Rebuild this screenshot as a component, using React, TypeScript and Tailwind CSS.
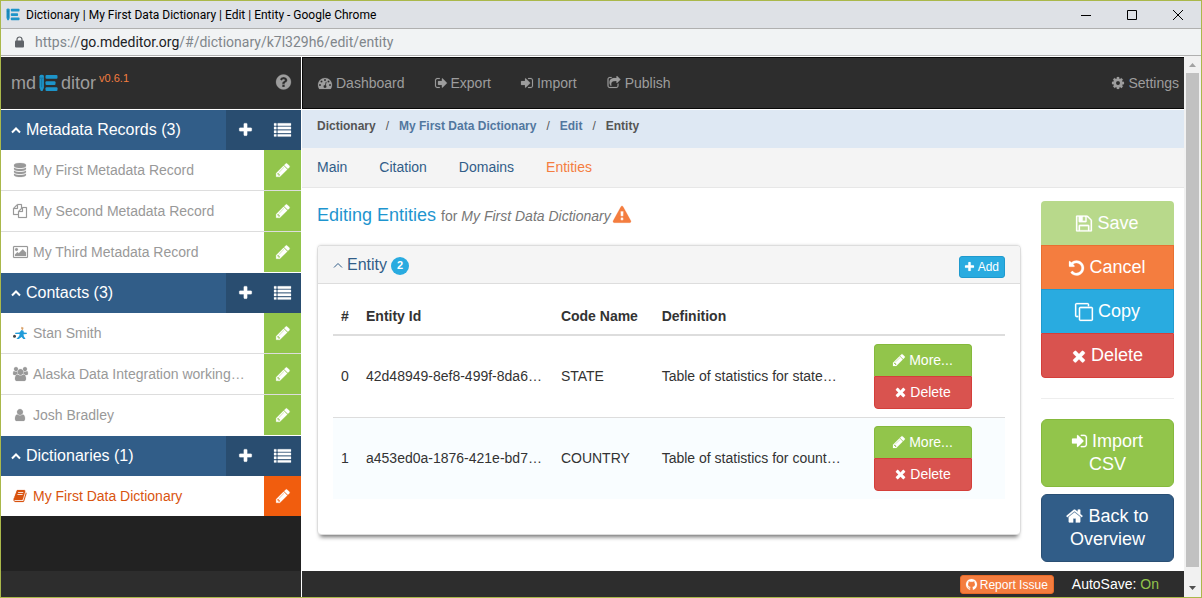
import type { ReactNode } from "react";

type IconSpec = { box: string; w: number; d: string };

const icons: Record<string, IconSpec> = {
  plus: {
    box: "192 0 1408 1792",
    w: 1408,
    d: "M1600 736v192q0 40-28 68t-68 28h-416v416q0 40-28 68t-68 28h-192q-40 0-68-28t-28-68v-416h-416q-40 0-68-28t-28-68v-192q0-40 28-68t68-28h416v-416q0-40 28-68t68-28h192q40 0 68 28t28 68v416h416q40 0 68 28t28 68z",
  },
  pencil: {
    box: "128 0 1536 1792",
    w: 1536,
    d: "M491 1536l91-91-235-235-91 91v107h128v128h107zm523-928q0-22-22-22-10 0-17 7l-542 542q-7 7-7 17 0 22 22 22 10 0 17-7l542-542q7-7 7-17zm-54-192l416 416-832 832h-416v-416zm683 96q0 53-37 90l-166 166-416-416 166-165q36-38 90-38 53 0 91 38l235 234q37 39 37 91z",
  },
  times: {
    box: "192 0 1408 1792",
    w: 1408,
    d: "M1490 1322q0 40-28 68l-136 136q-28 28-68 28t-68-28l-294-294-294 294q-28 28-68 28t-68-28l-136-136q-28-28-28-68t28-68l294-294-294-294q-28-28-28-68t28-68l136-136q28-28 68-28t68 28l294 294 294-294q28-28 68-28t68 28l136 136q28 28 28 68t-28 68l-294 294 294 294q28 28 28 68z",
  },
  question: {
    box: "128 0 1536 1792",
    w: 1536,
    d: "M1024 1376v-192q0-14-9-23t-23-9h-192q-14 0-23 9t-9 23v192q0 14 9 23t23 9h192q14 0 23-9t9-23zm256-672q0-88-55.5-163t-138.5-116-170-41q-243 0-371 213-15 24 8 42l132 100q7 6 19 6 16 0 25-12 53-68 86-92 34-24 86-24 48 0 85.5 26t37.5 59q0 38-20 61t-68 45q-63 28-115.5 86.5t-52.5 125.5v36q0 14 9 23t23 9h192q14 0 23-9t9-23q0-19 21.5-49.5t54.5-49.5q32-18 49-28.5t46-35 44.5-48 28-60.5 12.5-81zm384 192q0 209-103 385.5t-279.5 279.5-385.5 103-385.5-103-279.5-279.5-103-385.5 103-385.5 279.5-279.5 385.5-103 385.5 103 279.5 279.5 103 385.5z",
  },
  list: {
    box: "0 0 1792 1792",
    w: 1792,
    d: "M32 1280h192q32 0 32 32v192q0 32-32 32H32q-32 0-32-32v-192q0-32 32-32zM32 896h192q32 0 32 32v192q0 32-32 32H32q-32 0-32-32V928q0-32 32-32zM32 512h192q32 0 32 32v192q0 32-32 32H32q-32 0-32-32V544q0-32 32-32zM32 128h192q32 0 32 32v192q0 32-32 32H32q-32 0-32-32V160q0-32 32-32zM416 1280h1344q32 0 32 32v192q0 32-32 32H416q-32 0-32-32v-192q0-32 32-32zM416 896h1344q32 0 32 32v192q0 32-32 32H416q-32 0-32-32V928q0-32 32-32zM416 512h1344q32 0 32 32v192q0 32-32 32H416q-32 0-32-32V544q0-32 32-32zM416 128h1344q32 0 32 32v192q0 32-32 32H416q-32 0-32-32V160q0-32 32-32z",
  },
  signOut: {
    box: "64 0 1568 1792",
    w: 1568,
    d: "M704 1440q0 4 1 20t.5 26.5-3 23.5-10 19.5-20.5 6.5h-320q-119 0-203.5-84.5t-84.5-203.5v-704q0-119 84.5-203.5t203.5-84.5h320q13 0 22.5 9.5t9.5 22.5q0 4 1 20t.5 26.5-3 23.5-10 19.5-20.5 6.5h-320q-66 0-113 47t-47 113v704q0 66 47 113t113 47h312l11.5 1 11.5 3 8 5.5 7 9 2 13.5zm928-544q0 26-19 45l-544 544q-19 19-45 19t-45-19-19-45v-288h-448q-26 0-45-19t-19-45v-384q0-26 19-45t45-19h448v-288q0-26 19-45t45-19 45 19l544 544q19 19 19 45z",
  },
  signIn: {
    box: "128 0 1536 1792",
    w: 1536,
    d: "M1312 896q0 26-19 45l-544 544q-19 19-45 19t-45-19-19-45v-288h-448q-26 0-45-19t-19-45v-384q0-26 19-45t45-19h448v-288q0-26 19-45t45-19 45 19l544 544q19 19 19 45zm352-352v704q0 119-84.5 203.5t-203.5 84.5h-320q-13 0-22.5-9.5t-9.5-22.5q0-4-1-20t-.5-26.5 3-23.5 10-19.5 20.5-6.5h320q66 0 113-47t47-113v-704q0-66-47-113t-113-47h-312l-11.5-1-11.5-3-8-5.5-7-9-2-13.5q0-4-1-20t-.5-26.5 3-23.5 10-19.5 20.5-6.5h320q119 0 203.5 84.5t84.5 203.5z",
  },
  share: {
    box: "0 0 1792 1792",
    w: 1792,
    d: "M1472 989v259q0 119-84.5 203.5t-203.5 84.5h-832q-119 0-203.5-84.5t-84.5-203.5v-832q0-119 84.5-203.5t203.5-84.5h255q13 0 22.5 9.5t9.5 22.5q0 27-26 32-77 26-133 60-10 4-16 4h-112q-66 0-113 47t-47 113v832q0 66 47 113t113 47h832q66 0 113-47t47-113v-214q0-19 18-29 28-13 54-37 16-16 35-8 21 9 21 29zm237-496l-384 384q-18 19-45 19-12 0-25-5-39-17-39-59v-192h-160q-323 0-438 131-119 137-74 473 3 23-20 34-8 2-12 2-16 0-26-13-10-14-21-31t-39.5-68.5-49.5-99.5-38.5-114-17.5-122q0-49 3.5-91t14-90 28-88 47-81.5 68.5-74 94.5-61.5 124.5-48.5 159.5-30.5 196.5-11h160v-192q0-42 39-59 13-5 25-5 26 0 45 19l384 384q19 19 19 45t-19 45z",
  },
  warning: {
    box: "0 0 1792 1792",
    w: 1792,
    d: "M1024 1375v-190q0-14-9.5-23.5t-22.5-9.5h-192q-13 0-22.5 9.5t-9.5 23.5v190q0 14 9.5 23.5t22.5 9.5h192q13 0 22.5-9.5t9.5-23.5zm-2-374l18-459q0-12-10-19-13-11-24-11h-220q-11 0-24 11-10 7-10 21l17 457q0 10 10 16.5t24 6.5h185q14 0 23.5-6.5t10.5-16.5zm-14-934l768 1408q35 63-2 126-17 29-46.5 46t-63.5 17h-1536q-34 0-63.5-17t-46.5-46q-37-63-2-126l768-1408q17-31 47-49t65-18 65 18 47 49z",
  },
  cog: {
    box: "128 0 1536 1792",
    w: 1536,
    d: "M1152 896q0-106-75-181t-181-75-181 75-75 181 75 181 181 75 181-75 75-181zm512-109v222q0 12-8 23t-20 13l-185 28q-19 54-39 91 35 50 107 138 10 12 10 25t-9 23q-27 37-99 108t-94 71q-12 0-26-9l-138-108q-44 23-91 38-16 136-29 186-7 28-36 28h-222q-14 0-24.5-8.5t-11.5-21.5l-28-184q-49-16-90-37l-141 107q-10 9-25 9-14 0-25-11-126-114-165-168-7-10-7-23 0-12 8-23 15-21 51-66.5t54-70.5q-27-50-41-99l-183-27q-13-2-21-12.5t-8-23.5v-222q0-12 8-23t19-13l186-28q14-46 39-92-40-57-107-138-10-12-10-24 0-10 9-23 26-36 98.5-107.5t94.5-71.5q13 0 26 10l138 107q44-23 91-38 16-136 29-186 7-28 36-28h222q14 0 24.5 8.5t11.5 21.5l28 184q49 16 90 37l142-107q9-9 24-9 13 0 25 10 129 119 165 170 7 8 7 22 0 12-8 23-15 21-51 66.5t-54 70.5q26 50 41 98l183 28q13 2 21 12.5t8 23.5z",
  },
  undo: {
    box: "128 0 1536 1792",
    w: 1536,
    d: "M1664 896q0 156-61 298t-164 245-245 164-298 61q-172 0-327-72.5t-264-204.5q-7-10-6.5-22.5t8.5-20.5l137-138q10-9 25-9 16 2 23 12 73 95 179 147t225 52q104 0 198.5-40.5t163.5-109.5 109.5-163.5 40.5-198.5-40.5-198.5-109.5-163.5-163.5-109.5-198.5-40.5q-98 0-188 35.5t-160 101.5l137 138q31 30 14 69-17 40-59 40h-448q-26 0-45-19t-19-45v-448q0-42 40-59 39-17 69 14l130 129q107-101 244.5-156.5t284.5-55.5q156 0 298 61t245 164 164 245 61 298z",
  },
  floppy: {
    box: "128 0 1536 1792",
    w: 1536,
    d: "M512 1536h768v-384h-768v384zm896 0h128v-896q0-14-10-38.5t-20-34.5l-281-281q-10-10-34-20t-39-10v416q0 40-28 68t-68 28h-576q-40 0-68-28t-28-68v-416h-128v1280h128v-416q0-40 28-68t68-28h832q40 0 68 28t28 68v416zm-384-928v-320q0-13-9.5-22.5t-22.5-9.5h-192q-13 0-22.5 9.5t-9.5 22.5v320q0 13 9.5 22.5t22.5 9.5h192q13 0 22.5-9.5t9.5-22.5zm640 32v928q0 40-28 68t-68 28h-1344q-40 0-68-28t-28-68v-1344q0-40 28-68t68-28h928q40 0 88 20t76 48l280 280q28 28 48 76t20 88z",
  },
  clone: {
    box: "0 0 1792 1792",
    w: 1792,
    d: "M1664 1632v-1088q0-13-9.5-22.5t-22.5-9.5h-1088q-13 0-22.5 9.5t-9.5 22.5v1088q0 13 9.5 22.5t22.5 9.5h1088q13 0 22.5-9.5t9.5-22.5zm128-1088v1088q0 66-47 113t-113 47h-1088q-66 0-113-47t-47-113v-1088q0-66 47-113t113-47h1088q66 0 113 47t47 113zm-384-384v160h-128v-160q0-13-9.5-22.5t-22.5-9.5h-1088q-13 0-22.5 9.5t-9.5 22.5v1088q0 13 9.5 22.5t22.5 9.5h160v128h-160q-66 0-113-47t-47-113v-1088q0-66 47-113t113-47h1088q66 0 113 47t47 113z",
  },
  home: {
    box: "64 0 1664 1792",
    w: 1664,
    d: "M1472 992v480q0 26-19 45t-45 19h-384v-384h-256v384h-384q-26 0-45-19t-19-45v-480q0-1 .5-3t.5-3l575-474 575 474q1 2 1 6zm223-69l-62 74q-8 9-21 11h-3q-13 0-21-7l-692-577-692 577q-12 8-24 7-13-2-21-11l-62-74q-8-10-7-23.5t11-21.5l719-599q32-26 76-26t76 26l244 204v-195q0-14 9-23t23-9h192q14 0 23 9t9 23v408l219 182q10 8 11 21.5t-7 23.5z",
  },
  database: {
    box: "0 0 1792 1792",
    w: 1792,
    d: "M896 768q237 0 443-43t325-127v170q0 69-103 128t-280 93.5-385 34.5-385-34.5-280-93.5-103-128v-170q119 84 325 127t443 43zm0 768q237 0 443-43t325-127v170q0 69-103 128t-280 93.5-385 34.5-385-34.5-280-93.5-103-128v-170q119 84 325 127t443 43zm0-384q237 0 443-43t325-127v170q0 69-103 128t-280 93.5-385 34.5-385-34.5-280-93.5-103-128v-170q119 84 325 127t443 43zm0-1152q208 0 385 34.5t280 93.5 103 128v128q0 69-103 128t-280 93.5-385 34.5-385-34.5-280-93.5-103-128v-128q0-69 103-128t280-93.5 385-34.5z",
  },
  files: {
    box: "0 0 1792 1792",
    w: 1792,
    d: "M1696 384q40 0 68 28t28 68v1216q0 40-28 68t-68 28h-960q-40 0-68-28t-28-68v-288h-544q-40 0-68-28t-28-68v-672q0-40 20-88t48-76l408-408q28-28 76-48t88-20h416q40 0 68 28t28 68v328q68-40 128-40h416zm-544 213l-299 299h299v-299zm-640-384l-299 299h299v-299zm196 647l316-316v-416h-384v416q0 40-28 68t-68 28h-416v640h512v-256q0-40 20-88t48-76zm956 804v-1152h-384v416q0 40-28 68t-68 28h-416v640h896z",
  },
  picture: {
    box: "-64 0 1920 1792",
    w: 1920,
    d: "M576 576q0 80-56 136t-136 56-136-56-56-136 56-136 136-56 136 56 56 136zm1024 384v448h-1408v-192l320-320 160 160 512-512zm96-704h-1600q-13 0-22.5 9.5t-9.5 22.5v1216q0 13 9.5 22.5t22.5 9.5h1600q13 0 22.5-9.5t9.5-22.5v-1216q0-13-9.5-22.5t-22.5-9.5zm160 32v1216q0 66-47 113t-113 47h-1600q-66 0-113-47t-47-113v-1216q0-66 47-113t113-47h1600q66 0 113 47t47 113z",
  },
  book: {
    box: "0 0 1792 1792",
    w: 1792,
    d: "M1703 478q40 57 18 129l-275 906q-19 64-76.5 107.5t-122.5 43.5h-923q-77 0-148.5-53.5t-99.5-131.5q-24-67-2-127 0-4 3-27t4-37q1-8-3-21.5t-3-19.5q2-11 8-21t16.5-23.5 16.5-23.5q23-38 45-91.5t30-91.5q3-10 .5-30t-.5-28q3-11 17-28t17-23q21-36 42-92t25-90q1-9-2.5-32t.5-28q4-13 22-30.5t22-22.5q19-26 42.5-84.5t27.5-96.5q1-8-3-25.5t-2-26.5q2-8 9-18t18-23 17-21q8-12 16.5-30.5t15-35 16-36 19.5-32 26.5-23.5 36-11.5 47.5 5.5l-1 3q38-9 51-9h761q74 0 114 56t18 130l-274 906q-36 119-71.5 153.5t-128.5 34.5h-869q-27 0-38 15-11 16-1 43 24 70 144 70h923q29 0 56-15.5t35-41.5l300-987q7-22 5-57 38 15 59 43zm-1064 2q-4 13 2 22.5t20 9.5h608q13 0 25.5-9.5t16.5-22.5l21-64q4-13-2-22.5t-20-9.5h-608q-13 0-25.5 9.5t-16.5 22.5zm-83 256q-4 13 2 22.5t20 9.5h608q13 0 25.5-9.5t16.5-22.5l21-64q4-13-2-22.5t-20-9.5h-608q-13 0-25.5 9.5t-16.5 22.5z",
  },
  user: {
    box: "0 0 1792 1792",
    w: 1792,
    d: "M1536 1399q0 109-62.5 187t-150.5 78h-854q-88 0-150.5-78t-62.5-187q0-85 8.5-160.5t31.5-152 58.5-131 94-89 134.5-34.5q131 128 313 128t313-128q76 0 134.5 34.5t94 89 58.5 131 31.5 152 8.5 160.5zm-256-887q0 159-112.5 271.5t-271.5 112.5-271.5-112.5-112.5-271.5 112.5-271.5 271.5-112.5 271.5 112.5 112.5 271.5z",
  },
  users: {
    box: "-64 0 1920 1792",
    w: 1920,
    d: "M529 896q-162 5-265 128h-134q-82 0-138-40.5t-56-118.5q0-353 124-353 6 0 43.5 21t97.5 42.5 119 21.5q67 0 133-23-5 37-5 66 0 139 81 256zm1071 637q0 120-73 189.5t-194 69.5h-874q-121 0-194-69.5t-73-189.5q0-53 3.5-103.5t14-109 26.5-108.5 43-97.5 62-81 85.5-53.5 111.5-20q10 0 43 21.5t73 48 107 48 135 21.5 135-21.5 107-48 73-48 43-21.5q61 0 111.5 20t85.5 53.5 62 81 43 97.5 26.5 108.5 14 109 3.5 103.5zm-1024-1277q0 106-75 181t-181 75-181-75-75-181 75-181 181-75 181 75 75 181zm704 384q0 159-112.5 271.5t-271.5 112.5-271.5-112.5-112.5-271.5 112.5-271.5 271.5-112.5 271.5 112.5 112.5 271.5zm576 225q0 78-56 118.5t-138 40.5h-134q-103-123-265-128 81-117 81-256 0-29-5-66 66 23 133 23 59 0 119-21.5t97.5-42.5 43.5-21q124 0 124 353zm-128-609q0 106-75 181t-181 75-181-75-75-181 75-181 181-75 181 75 75 181z",
  },
  tachometer: {
    box: "0 0 1792 1792",
    w: 1792,
    d: "M384 1152q0-53-37.5-90.5t-90.5-37.5-90.5 37.5-37.5 90.5 37.5 90.5 90.5 37.5 90.5-37.5 37.5-90.5zm192-448q0-53-37.5-90.5t-90.5-37.5-90.5 37.5-37.5 90.5 37.5 90.5 90.5 37.5 90.5-37.5 37.5-90.5zm428 481l101-382q6-26-7.5-48.5t-38.5-29.5-48 6.5-30 39.5l-101 382q-60 5-107 43.5t-63 98.5q-20 77 20 146t117 89 146-20 89-117q16-60-6-117t-72-91zm660-33q0-53-37.5-90.5t-90.5-37.5-90.5 37.5-37.5 90.5 37.5 90.5 90.5 37.5 90.5-37.5 37.5-90.5zm-640-640q0-53-37.5-90.5t-90.5-37.5-90.5 37.5-37.5 90.5 37.5 90.5 90.5 37.5 90.5-37.5 37.5-90.5zm448 192q0-53-37.5-90.5t-90.5-37.5-90.5 37.5-37.5 90.5 37.5 90.5 90.5 37.5 90.5-37.5 37.5-90.5zm320 448q0 261-141 483-19 29-54 29h-1402q-35 0-54-29-141-221-141-483 0-182 71-348t191-286 286-191 348-71 348 71 286 191 191 286 71 348z",
  },
  github: {
    box: "128 0 1536 1792",
    w: 1536,
    d: "M896 128q209 0 385.5 103t279.5 279.5 103 385.5q0 251-146.5 451.5t-378.5 277.5q-27 5-40-7t-13-30q0-3 .5-76.5t.5-134.5q0-97-52-142 57-6 102.5-18t94-39 81-66.5 53-105 20.5-150.5q0-119-79-206 37-91-8-204-28-9-81 11t-92 44l-38 24q-93-26-192-26t-192 26q-16-11-42.5-27t-83.5-38.5-85-13.5q-45 113-8 204-79 87-79 206 0 85 20.5 150t52.5 105 80.5 67 94 39 102.5 18q-39 36-49 103-21 10-45 15t-57 5-65.5-21.5-55.5-62.5q-19-32-48.5-52t-49.5-24l-20-3q-21 0-29 4.5t-5 11.5 9 14 13 12l7 5q22 10 43.5 38t31.5 51l10 23q13 38 44 61.5t67 30 69.5 7 55.5-3.5l23-4q0 38 .5 88.5t.5 54.5q0 18-13 30t-40 7q-232-77-378.5-277.5t-146.5-451.5q0-209 103-385.5t279.5-279.5 385.5-103z",
  },
};

function Icon({ name, size = 14 }: { name: string; size?: number }) {
  const icon = icons[name];
  return (
    <svg
      aria-hidden="true"
      viewBox={icon.box}
      width={Math.round((size * icon.w) / 1792)}
      height={size}
      fill="currentColor"
      stroke="currentColor"
      strokeWidth={24}
      className="inline-block shrink-0 overflow-visible align-[-3px]"
    >
      <path d={icon.d} />
    </svg>
  );
}

function Chevron({ stroke }: { stroke: number }) {
  return (
    <svg aria-hidden="true" viewBox="0 0 10 8" width={10} height={8} fill="none" stroke="currentColor" strokeWidth={stroke} className="shrink-0">
      <path d="M1 6.500 5 2.500 9 6.500" />
    </svg>
  );
}

function Logo({ size }: { size: number }) {
  return (
    <svg aria-hidden="true" viewBox="0 0 19 18" width={size} height={size - 1} className="shrink-0">
      <g fill="#1d94c9">
        <path d="M.5 2.200Q.5.8 2.700.8t2.200 1.400v11.600L3.600 17H1.800L.5 13.800z" />
        <rect x="6.500" y="1" width="12" height="3.800" rx="1" />
        <rect x="6.500" y="7.200" width="10" height="3.800" rx="1" />
        <rect x="6.500" y="13.200" width="12" height="3.800" rx="1" />
      </g>
      <path d="M1 4.200h3.400M2.700 5v8.200" stroke="#14688f" strokeWidth=".7" />
    </svg>
  );
}

function Runner() {
  return (
    <svg aria-hidden="true" viewBox="0 0 14 14" width={14} height={14} className="shrink-0">
      <path d="M2.200 6.800 6.500 6.400 8.500 4l2 .8.3 1.800 3 .2v1.200l-3.300.2.3 2 1.800 2.800h-2.200L8.600 11 5.800 12.900H3.400l2.800-3 .4-1.900-4.300.1z" fill="#1f9bd9" />
      <path d="M8.400.8 10.600 1.800 9.800 4.200 8.200 3z" fill="#d9a066" />
      <circle cx="1.500" cy="10.200" r="1.500" fill="#444" />
    </svg>
  );
}

const sections = [
  {
    title: "Metadata Records (3)",
    items: [
      { icon: "database", label: "My First Metadata Record" },
      { icon: "files", label: "My Second Metadata Record" },
      { icon: "picture", label: "My Third Metadata Record" },
    ],
  },
  {
    title: "Contacts (3)",
    items: [
      { icon: "runner", label: "Stan Smith" },
      { icon: "users", label: "Alaska Data Integration working…" },
      { icon: "user", label: "Josh Bradley" },
    ],
  },
  {
    title: "Dictionaries (1)",
    items: [{ icon: "book", label: "My First Data Dictionary", active: true }],
  },
] as { title: string; items: { icon: string; label: string; active?: boolean }[] }[];

function Sidebar() {
  return (
    <aside className="flex w-[301px] shrink-0 flex-col border-r border-white bg-[#222]">
      <div className="flex h-[53px] items-center border-b border-white bg-[#2d2d2d] px-[10px] text-[#9d9d9d]">
        <a href="#home" className="flex flex-1 items-center text-[18px]">
          md
          <span className="mx-[3px]">
            <Logo size={19} />
          </span>
          ditor
          <span className="mb-[10px] ml-[3px] text-[11px] text-[#f47d3f]">v0.6.1</span>
        </a>
        <button type="button" aria-label="Help">
          <Icon name="question" size={18} />
        </button>
      </div>
      {sections.map((section) => (
        <section key={section.title} className="group">
          <div className="flex h-10 bg-[#315d88] text-white">
            <button type="button" className="flex flex-1 items-center gap-[5px] pl-[10px] text-[16px]">
              <Chevron stroke={2} />
              {section.title}
            </button>
            <button type="button" aria-label="Add" className="flex w-[38px] items-center justify-center bg-[#294d70]">
              <Icon name="plus" size={16} />
            </button>
            <button type="button" aria-label="List" className="flex w-[37px] items-center justify-center bg-[#294d70]">
              <Icon name="list" size={17} />
            </button>
          </div>
          <ul>
            {section.items.map((item) => (
              <li
                key={item.label}
                className="flex border-b border-[#ddd] bg-white last:border-white group-last-of-type:border-b-0"
              >
                <a
                  href="#record"
                  className={
                    item.active
                      ? "flex h-10 flex-1 items-center gap-[5px] pl-[11px] text-[14px] text-[#d9540f]"
                      : "flex h-10 flex-1 items-center gap-[5px] pl-[11px] text-[14px] text-[#999]"
                  }
                >
                  <span className="flex w-4 shrink-0 justify-center">
                    {item.icon === "runner" ? <Runner /> : <Icon name={item.icon} />}
                  </span>
                  {item.label}
                </a>
                <button
                  type="button"
                  aria-label={`Edit ${item.label}`}
                  className={
                    item.active
                      ? "flex w-[37px] items-center justify-center bg-[#f15d0e] text-white"
                      : "flex w-[37px] items-center justify-center bg-[#92c54b] text-white"
                  }
                >
                  <Icon name="pencil" size={16} />
                </button>
              </li>
            ))}
          </ul>
        </section>
      ))}
      <div className="mt-auto h-[26px] bg-[#2d2d2d]" />
    </aside>
  );
}

function NavLink({ icon, children }: { icon: string; children: ReactNode }) {
  return (
    <a href="#nav" className="flex items-center gap-1">
      <Icon name={icon} />
      {children}
    </a>
  );
}

const rows = [
  { id: "42d48949-8ef8-499f-8da6…", code: "STATE", def: "Table of statistics for state…" },
  { id: "a453ed0a-1876-421e-bd7…", code: "COUNTRY", def: "Table of statistics for count…" },
];

function EntityPanel() {
  return (
    <section className="rounded-[4px] border border-[#ddd] bg-white shadow-[0_-1px_3px_-1px_rgba(0,0,0,0.15),0_5px_4px_-3px_rgba(0,0,0,0.55)]">
      <header className="flex h-[38px] items-center justify-between rounded-t-[3px] border-b border-[#ddd] bg-[#f5f5f5] px-[15px]">
        <button type="button" className="flex items-center gap-1 text-[16px] text-[#315d88]">
          <Chevron stroke={1} />
          Entity
          <span className="mt-[2px] flex h-[18px] w-[18px] items-center justify-center rounded-full bg-[#29abe0] text-[11px] font-bold text-white">
            2
          </span>
        </button>
        <button
          type="button"
          className="mt-1 flex h-[22px] items-center gap-1 rounded-[3px] border border-[#1f9ace] bg-[#29abe0] px-[5px] text-[12px] text-white"
        >
          <Icon name="plus" size={12} />
          Add
        </button>
      </header>
      <div className="px-[15px] pt-[14px] pb-[35px]">
        <table className="w-full table-fixed border-collapse text-left text-[14px] leading-5 text-[#333]">
          <thead>
            <tr className="border-b-2 border-[#ddd]">
              <th className="w-[25px] p-2">#</th>
              <th className="w-[29%] p-2">Entity Id</th>
              <th className="w-[15%] p-2">Code Name</th>
              <th className="p-2">Definition</th>
              <th className="w-[139px] p-2" aria-label="Actions" />
            </tr>
          </thead>
          <tbody>
            {rows.map((row, i) => (
              <tr key={row.id} className="border-[#ddd] even:border-t even:bg-[#f9fdff]">
                <td className="px-2 pt-2 pb-[10px]">{i}</td>
                <td className="px-2 pt-2 pb-[10px]">{row.id}</td>
                <td className="px-2 pt-2 pb-[10px]">{row.code}</td>
                <td className="px-2 pt-2 pb-[10px]">{row.def}</td>
                <td className="p-2">
                  <div className="flex w-[98px] flex-col text-white">
                    <button
                      type="button"
                      className="flex h-8 items-center justify-center gap-1 rounded-t-[4px] border border-b-0 border-[#85b93c] bg-[#92c54b] pb-px"
                    >
                      <Icon name="pencil" />
                      More...
                    </button>
                    <button
                      type="button"
                      className="flex h-[33px] items-center justify-center gap-1 rounded-b-[4px] border border-[#d43f3a] bg-[#d9534f] pb-px"
                    >
                      <Icon name="times" />
                      Delete
                    </button>
                  </div>
                </td>
              </tr>
            ))}
          </tbody>
        </table>
      </div>
    </section>
  );
}

function Actions() {
  return (
    <div className="flex w-[133px] shrink-0 flex-col text-[18px] leading-[23px] text-white">
      <button type="button" className="flex h-11 items-center justify-center gap-[5px] rounded-t-[4px] bg-[#b8d98b]">
        <Icon name="floppy" size={19} />
        Save
      </button>
      <button type="button" className="flex h-11 items-center justify-center gap-[5px] border border-b-0 border-[#e87030] bg-[#f47d3f]">
        <Icon name="undo" size={18} />
        Cancel
      </button>
      <button type="button" className="flex h-11 items-center justify-center gap-[5px] border border-b-0 border-[#1f9ace] bg-[#29abe0]">
        <Icon name="clone" size={18} />
        Copy
      </button>
      <button type="button" className="flex h-[45px] items-center justify-center gap-[5px] rounded-b-[4px] border border-[#d43f3a] bg-[#d9534f]">
        <Icon name="times" size={18} />
        Delete
      </button>
      <hr className="my-5 border-[#eee]" />
      <button type="button" className="rounded-[6px] border border-[#85b93c] bg-[#92c54b] px-4 py-[10px]">
        <Icon name="signIn" size={18} /> Import CSV
      </button>
      <button type="button" className="mt-[7px] rounded-[6px] border border-[#2a4f74] bg-[#315d88] px-4 py-[10px]">
        <Icon name="home" size={18} /> Back to Overview
      </button>
    </div>
  );
}

function Scrollbar() {
  return (
    <div className="flex w-[17px] shrink-0 flex-col items-center bg-[#f1f1f1]">
      <svg aria-hidden="true" viewBox="0 0 17 17" className="h-[17px] w-[17px]">
        <path d="M5 11 8.500 7 12 11z" fill="#a3a3a3" />
      </svg>
      <div className="w-[13px] flex-1 bg-[#c1c1c1]" />
      <svg aria-hidden="true" viewBox="0 0 17 17" className="mt-[13px] h-[17px] w-[17px]">
        <path d="M5 6 8.500 10 12 6z" fill="#505050" />
      </svg>
    </div>
  );
}

function WindowChrome() {
  return (
    <>
      <div className="flex h-7 items-center border-b border-[#b0b0b0] bg-[#dee1e6] pl-[5px] font-['Roboto','Noto_Sans',sans-serif] text-[12px] text-black">
        <Logo size={14} />
        <span className="ml-[6px] flex-1">Dictionary | My First Data Dictionary | Edit | Entity - Google Chrome</span>
        <button type="button" aria-label="Minimize" className="flex w-[46px] justify-center">
          <svg viewBox="0 0 10 10" width={10} height={10}>
            <path d="M0 5.500h10" stroke="#000" />
          </svg>
        </button>
        <button type="button" aria-label="Maximize" className="flex w-[46px] justify-center">
          <svg viewBox="0 0 10 10" width={10} height={10}>
            <path d="M.5.5h9v9h-9z" stroke="#000" fill="none" />
          </svg>
        </button>
        <button type="button" aria-label="Close" className="flex w-[46px] justify-center">
          <svg viewBox="0 0 10 10" width={10} height={10}>
            <path d="M0 0 10 10M10 0 0 10" stroke="#000" />
          </svg>
        </button>
      </div>
      <div className="flex h-[27px] items-center border-b border-[#b0b0b0] bg-[#f1f3f4] pl-[14px] font-['Roboto','Noto_Sans',sans-serif] text-[14px] text-[#80868b]">
        <svg aria-hidden="true" viewBox="0 0 9 12" width={9} height={12} className="mr-[11px]">
          <path d="M2 5V3.500a2.500 2.500 0 0 1 5 0V5" fill="none" stroke="#5f6368" strokeWidth="1.200" />
          <rect y="4.500" width="9" height="7" rx="1" fill="#5f6368" />
        </svg>
        <span>
          https://<span className="text-[#202124]">go.mdeditor.org</span>/#/dictionary/k7l329h6/edit/entity
        </span>
      </div>
    </>
  );
}

export default function App() {
  return (
    <div className="flex min-h-screen flex-col border border-[#aab84a] bg-white font-['Liberation_Sans',Arial,sans-serif]">
      <WindowChrome />
      <div className="flex flex-1">
        <div className="flex flex-1 pt-px">
          <Sidebar />
          <div className="flex min-w-0 flex-1 flex-col">
            <nav className="flex h-[52px] items-center gap-[30px] border border-r-0 border-[#080808] bg-[#2d2d2d] pr-[5px] pl-[15px] text-[14px] text-[#9d9d9d]">
              <NavLink icon="tachometer">Dashboard</NavLink>
              <NavLink icon="signOut">Export</NavLink>
              <NavLink icon="signIn">Import</NavLink>
              <NavLink icon="share">Publish</NavLink>
              <div className="ml-auto">
                <NavLink icon="cog">Settings</NavLink>
              </div>
            </nav>
            <ol className="mt-px flex h-[38px] gap-[10px] bg-[#dee8f3] pt-[7px] pl-[15px] text-[12px] leading-[18px] font-bold text-[#555]">
              <li>Dictionary</li>
              <li className="font-normal">/</li>
              <li>
                <a href="#dictionary" className="text-[#52779f]">
                  My First Data Dictionary
                </a>
              </li>
              <li className="font-normal">/</li>
              <li>
                <a href="#edit" className="text-[#52779f]">
                  Edit
                </a>
              </li>
              <li className="font-normal">/</li>
              <li>Entity</li>
            </ol>
            <div className="flex h-10 items-center gap-8 border-b border-[#e7e7e7] bg-[#f4f4f4] pl-[15px] text-[14px] text-[#315d88]">
              <a href="#main">Main</a>
              <a href="#citation">Citation</a>
              <a href="#domains">Domains</a>
              <a href="#entities" className="text-[#f47d3f]">
                Entities
              </a>
            </div>
            <main className="flex flex-1 gap-5 pt-[13px] pr-[10px] pb-[9px] pl-[15px]">
              <div className="min-w-0 flex-1">
                <h1 className="mb-4 h-7 text-[18px] leading-7 text-[#1f95cf]">
                  Editing Entities{" "}
                  <span className="text-[14px] text-[#777]">
                    for <em>My First Data Dictionary</em>
                  </span>
                  <span className="ml-[2px] text-[#f47d3f]">
                    <Icon name="warning" size={18} />
                  </span>
                </h1>
                <EntityPanel />
              </div>
              <Actions />
            </main>
            <footer className="flex h-[26px] items-center justify-end gap-[18px] bg-[#2d2d2d] pr-[25px] text-[14px] text-white">
              <button
                type="button"
                className="mt-px flex h-[19px] items-center gap-[3px] rounded-[3px] border border-[#e86a28] bg-[#f47d3f] px-[5px] text-[12px]"
              >
                <Icon name="github" size={13} />
                Report Issue
              </button>
              <span>
                AutoSave: <span className="text-[#92c54b]">On</span>
              </span>
            </footer>
          </div>
        </div>
        <Scrollbar />
      </div>
    </div>
  );
}
